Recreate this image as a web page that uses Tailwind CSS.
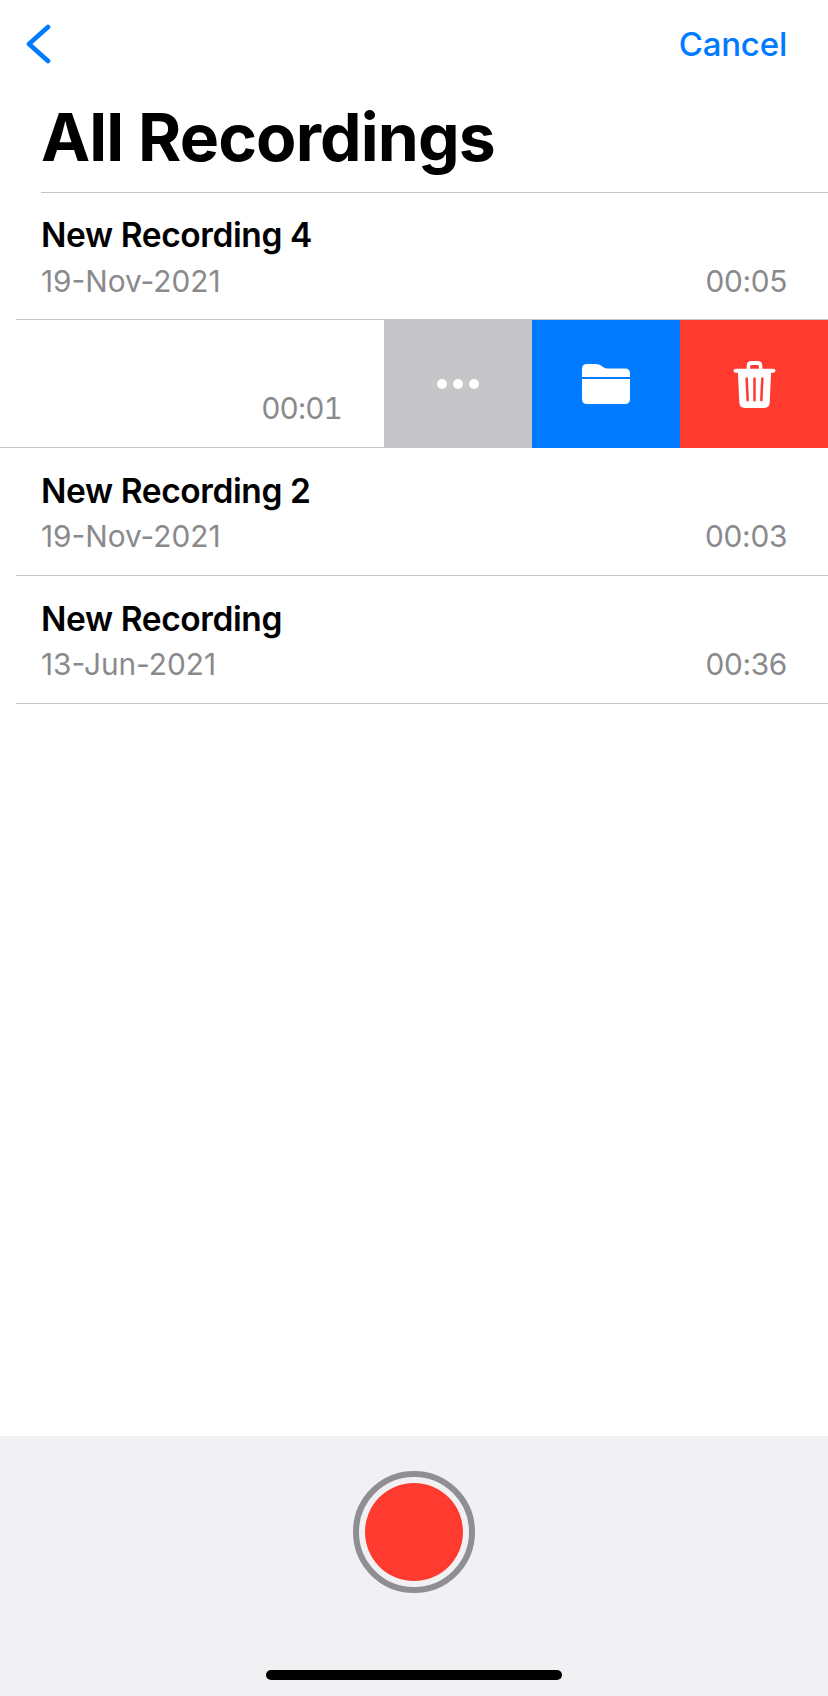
<!DOCTYPE html>
<html lang="en">
<head>
    <meta charset="UTF-8">
    <meta name="viewport" content="width=device-width, initial-scale=1.0">
    <title>All Recordings</title>
    <script src="https://cdn.jsdelivr.net/npm/@tailwindcss/browser@4"></script>
</head>
<body class="bg-white font-['Inter',sans-serif] text-black">
    <div class="w-[828px] h-[1696px] flex flex-col overflow-hidden">
        <!-- Nav bar -->
        <div class="h-[88px] flex items-start justify-between pl-[26px] pr-[41px] shrink-0">
            <svg class="mt-[24px] w-[26px] h-[40px]" viewBox="0 0 26 40" fill="none" stroke="#007aff" stroke-width="4.6" stroke-linecap="round" stroke-linejoin="round">
                <path d="M22 3 L3 20 L22 37" />
            </svg>
            <span class="mt-[26px] text-[#007aff] text-[33px] leading-[36px] font-medium tracking-[-0.2px]">Cancel</span>
        </div>

        <!-- Title -->
        <div class="ml-[41px] h-[105px] shrink-0 border-b border-[#c6c6c8]">
            <h1 class="text-[66px] leading-[80px] pt-[9px] font-bold tracking-[-0.9px]">All Recordings</h1>
        </div>

        <!-- Recordings -->
        <div class="h-[127px] shrink-0 ml-[16px] pl-[25px] pr-[41px] pt-[24px] border-b border-[#c6c6c8]">
            <div class="text-[33.500px] leading-[36px] font-semibold tracking-[-0.4px]">New Recording 4</div>
            <div class="mt-[10px] flex justify-between text-[29.800px] leading-[36px] text-[#8a8a8e]">
                <span>19-Nov-2021</span>
                <span class="tracking-[-0.3px]">00:05</span>
            </div>
        </div>

        <!-- Swiped row -->
        <div class="h-[128px] shrink-0 flex">
            <div class="w-[384px] border-b border-[#c6c6c8] flex justify-end pr-[42px] pt-[70px]">
                <span class="text-[29.800px] leading-[36px] text-[#8a8a8e] tabular-nums tracking-[-0.9px]">00:01</span>
            </div>
            <div class="w-[148px] bg-[#c6c6c8] flex items-center justify-center gap-[6px]">
                <span class="w-[10px] h-[10px] rounded-full bg-white"></span>
                <span class="w-[10px] h-[10px] rounded-full bg-white"></span>
                <span class="w-[10px] h-[10px] rounded-full bg-white"></span>
            </div>
            <div class="w-[148px] bg-[#007aff] flex items-center justify-center">
                <svg class="w-[50px] h-[42px]" viewBox="0 0 50 42" fill="#fff">
                    <path d="M1 14 V6 Q1 1 6 1 H14 Q19 1 22 4 Q24 5.500 27 5.500 H44 Q49 5.500 49 10.500 V14 Z" />
                    <path d="M1 16 H49 V36 Q49 41 44 41 H6 Q1 41 1 36 Z" />
                </svg>
            </div>
            <div class="w-[148px] bg-[#ff3b30] flex items-center justify-center">
                <svg class="w-[43px] h-[49px]" viewBox="0 0 44 50">
                    <path fill="#fff" d="M14 9 V6 Q14 1 19 1 H25 Q30 1 30 6 V9 H41 Q43.500 9 43.500 11 Q43.500 13 41 13 H39 L37.500 44 Q37 49 32 49 H12 Q7 49 6.500 44 L5 13 H3 Q0.500 13 0.500 11 Q0.500 9 3 9 Z" />
                    <path fill="#ff3b30" d="M17.500 9 H26.500 V6.500 Q26.500 5 25 5 H19 Q17.500 5 17.500 6.500 Z" />
                    <path fill="none" stroke="#ff3b30" stroke-width="2.600" stroke-linecap="round" d="M14 19 L15 41 M22 19 V41 M30 19 L29 41" />
                </svg>
            </div>
        </div>

        <div class="h-[128px] shrink-0 ml-[16px] pl-[25px] pr-[41px] pt-[25px] border-b border-[#c6c6c8]">
            <div class="text-[33.500px] leading-[36px] font-semibold tracking-[-0.4px]">New Recording 2</div>
            <div class="mt-[9px] flex justify-between text-[29.800px] leading-[36px] text-[#8a8a8e]">
                <span>19-Nov-2021</span>
                <span class="tracking-[-0.3px]">00:03</span>
            </div>
        </div>

        <div class="h-[128px] shrink-0 ml-[16px] pl-[25px] pr-[41px] pt-[25px] border-b border-[#c6c6c8]">
            <div class="text-[33.500px] leading-[36px] font-semibold tracking-[-0.4px]">New Recording</div>
            <div class="mt-[9px] flex justify-between text-[29.800px] leading-[36px] text-[#8a8a8e]">
                <span>13-Jun-2021</span>
                <span class="tracking-[-0.3px]">00:36</span>
            </div>
        </div>

        <div class="flex-1"></div>

        <!-- Record bar -->
        <div class="h-[260px] shrink-0 bg-[#f1f1f4] flex flex-col items-center pt-[35px]">
            <div class="w-[122px] h-[122px] rounded-full border-[6px] border-[#8e8e93] flex items-center justify-center">
                <div class="w-[98px] h-[98px] rounded-full bg-[#ff3b30]"></div>
            </div>
            <div class="mt-[77px] w-[296px] h-[10px] rounded-full bg-black"></div>
        </div>
    </div>
</body>
</html>
